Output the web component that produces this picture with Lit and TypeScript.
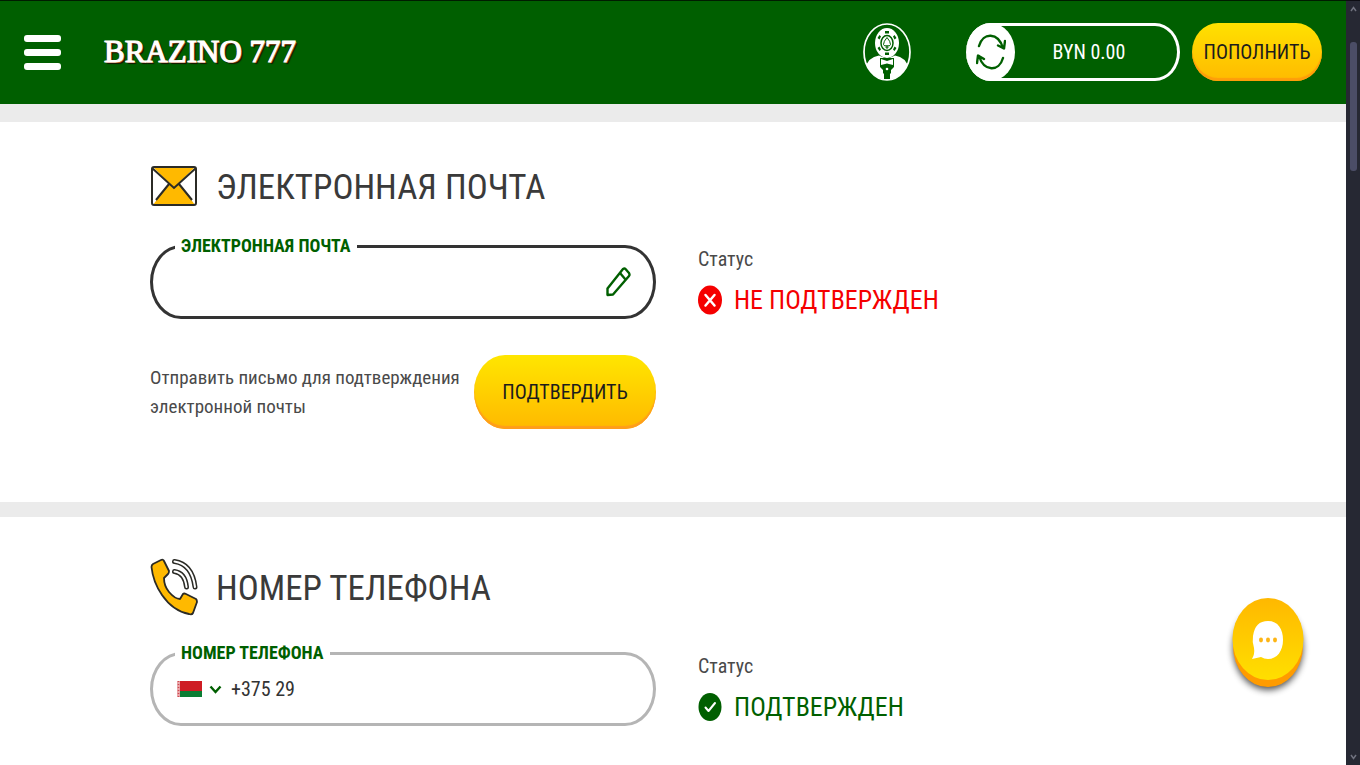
import { LitElement, html, css, svg } from "lit";
import { customElement, property } from "lit/decorators.js";

const envelopeIcon = svg`
  <svg width="48" height="42" viewBox="0 0 48 42" aria-hidden="true">
    <rect x="2" y="2" width="44" height="38" rx="2" fill="#fff"/>
    <path d="M3 2H45L24 23Z" fill="#ffb900"/>
    <path d="M3 40L19 18L24 23L29 18L45 40Z" fill="#ffb900"/>
    <path d="M2 3L24 23L46 3M19 19L6 35M29 19L42 35" fill="none" stroke="#2b2b26" stroke-width="2"/>
    <rect x="2" y="2" width="44" height="38" rx="2" fill="none" stroke="#2b2b26" stroke-width="2"/>
  </svg>`;

const phoneIcon = svg`
  <svg width="48" height="58" viewBox="0 0 48 58" aria-hidden="true">
    <path d="M3 6L11 2Q13 1 14 3L19 13Q19 15 18 16L14 20Q14 28 19 34Q25 41 30 41L33 36Q34 35 36 36L46 41Q47 42 47 44L43 55Q42 57 39 56Q23 53 12 37Q3 24 1.500 9Q1.500 7 3 6Z" fill="#ffb900" stroke="#2b2b26" stroke-width="1.800" stroke-linejoin="round"/>
    <path d="M24.500 3.500Q42 6 45 29M24.500 13.500Q35 15 36.500 29" fill="none" stroke="#2b2b26" stroke-width="5" stroke-linecap="round"/>
    <path d="M24.500 3.500Q42 6 45 29M24.500 13.500Q35 15 36.500 29" fill="none" stroke="#fff" stroke-width="2" stroke-linecap="round"/>
  </svg>`;

const avatarIcon = svg`
  <svg width="48" height="58" viewBox="0 0 48 58" aria-hidden="true">
    <defs><clipPath id="face"><ellipse cx="24" cy="29" rx="23" ry="28"/></clipPath></defs>
    <g clip-path="url(#face)">
      <path d="M2 46Q5 34 16 32.500L24 36L32 32.500Q43 34 46 46V58H2Z" fill="#fff"/>
      <path d="M17 35H31V44L28 47V50L27 51V56H21V51L20 50V47L17 44Z" fill="#005f00"/>
      <path d="M18 36L24 38L30 36V42L24 40.500L18 42Z" fill="#fff"/>
      <circle cx="24" cy="46" r="1.300" fill="#fff"/>
    </g>
    <ellipse cx="24" cy="20" rx="12" ry="15" fill="#fff"/>
    <g fill="#005f00">
      <path d="M22 8H26V10.500H22ZM22 29.500H26V32H22ZM14.500 15L16.500 12L18 13.500L16.500 16.500ZM33.500 15L31.500 12L30 13.500L31.500 16.500ZM14.500 25L16.500 28L18 26.500L16.500 23.500ZM33.500 25L31.500 28L30 26.500L31.500 23.500Z"/>
    </g>
    <ellipse cx="24" cy="20" rx="6" ry="7.500" fill="#fff" stroke="#005f00" stroke-width="1.500"/>
    <path d="M24 14.500Q20.500 18.500 20.500 21.500Q21.500 24 23.500 22.500L23 25H25L24.500 22.500Q26.500 24 27.500 21.500Q27.500 18.500 24 14.500Z" fill="none" stroke="#005f00" stroke-width="1"/>
    <ellipse cx="24" cy="29" rx="23" ry="28" fill="none" stroke="#fff" stroke-width="1.700"/>
  </svg>`;

const refreshIcon = svg`
  <svg width="30" height="36" viewBox="0 0 30 36" aria-hidden="true" fill="none" stroke="#005f00" stroke-width="2.400" stroke-linecap="round" stroke-linejoin="round">
    <path d="M3 12C7 -2 22 -2 27 14M22 11.500L28 14.500L29 7"/>
    <path d="M27 24C23 38 8 38 3 22M8 25L2 21.500L1 29"/>
  </svg>`;

const pencilIcon = svg`
  <svg width="26" height="30" viewBox="0 0 26 30" aria-hidden="true" fill="none" stroke="#005f00" stroke-width="2.400" stroke-linejoin="round">
    <path d="M2.500 28V21.500L18 2Q19.500 1 20.500 2L24 6Q25 8 24 9L8 27.500Z"/>
    <path d="M15 6L20.500 12.500"/>
  </svg>`;

const crossIcon = svg`
  <svg width="24" height="30" viewBox="0 0 24 30" aria-hidden="true">
    <ellipse cx="12" cy="15" rx="12" ry="14.500" fill="#f50000"/>
    <path d="M7.500 10L16.500 20.500M16.500 10L7.500 20.500" stroke="#fff" stroke-width="2.500" stroke-linecap="round"/>
  </svg>`;

const tickIcon = svg`
  <svg width="24" height="30" viewBox="0 0 24 30" aria-hidden="true">
    <ellipse cx="12" cy="15" rx="11.500" ry="14" fill="#005f00"/>
    <path d="M7.500 15.500L10.500 19L17 11" fill="none" stroke="#fff" stroke-width="2" stroke-linecap="round" stroke-linejoin="round"/>
  </svg>`;

@customElement("status-block")
class StatusBlock extends LitElement {
  @property({ type: Boolean }) confirmed = false;

  static styles = css`
    :host { display: block; padding-top: 8px; }
    .caption { margin: 0 0 11px; font-size: 20px; line-height: 30px; color: #4a4a4a; }
    .value { margin: 0; display: flex; align-items: center; gap: 12px; font-size: 26px; line-height: 30px; color: #f50000; }
    .value.ok { color: #005f00; }
    svg { display: block; flex: none; }
  `;

  render() {
    return html`
      <p class="caption">Статус</p>
      <p class="value ${this.confirmed ? "ok" : ""}">
        ${this.confirmed ? tickIcon : crossIcon}
        <span>${this.confirmed ? "ПОДТВЕРЖДЕН" : "НЕ ПОДТВЕРЖДЕН"}</span>
      </p>`;
  }
}

@customElement("top-bar")
class TopBar extends LitElement {
  static styles = css`
    :host { display: block; background: #005f00; border-top: 1px solid #001c00; }
    .bar { display: flex; align-items: center; height: 103px; padding: 0 24px 1px; box-sizing: border-box; }
    button { border: 0; padding: 0; background: none; font: inherit; cursor: pointer; }
    svg { display: block; }
    .menu { display: grid; gap: 7px; width: 37px; }
    .menu span { height: 7px; border-radius: 3px; background: #fff; }
    .logo { margin-left: 43px; font: 31px/40px "Liberation Serif", serif; color: #fff; text-decoration: none; white-space: nowrap;
      -webkit-text-stroke: 1px #fff; text-shadow: 1px 1px 0 #b5602c, -1px 0 0 #b5602c, 2px 2px 1px #1c1000; }
    .space { flex: 1; }
    .balance { display: flex; align-items: center; margin: 0 12px 0 55px; width: 214px; height: 58px; box-sizing: border-box;
      border: 3px solid #fff; border-left: 0; border-radius: 25px / 29px; color: #fff; }
    .refresh { display: grid; place-items: center; flex: none; width: 49px; height: 58px; border-radius: 50%; background: #fff; }
    .amount { flex: 1; text-align: center; padding-right: 14px; font-size: 20px; line-height: 30px; }
    .deposit { width: 130px; height: 58px; border-radius: 26px / 29px; background: linear-gradient(#ffe100, #ffba00);
      box-shadow: inset 0 -3px 1px #ff9d0a; font-size: 20px; color: #1c1c1c; }
  `;

  render() {
    return html`
      <header class="bar">
        <button class="menu" aria-label="Меню"><span></span><span></span><span></span></button>
        <a class="logo" href="#">BRAZINO 777</a>
        <span class="space"></span>
        <button aria-label="Профиль">${avatarIcon}</button>
        <div class="balance">
          <button class="refresh" aria-label="Обновить баланс">${refreshIcon}</button>
          <span class="amount">BYN 0.00</span>
        </div>
        <button class="deposit">ПОПОЛНИТЬ</button>
      </header>`;
  }
}

@customElement("app-root")
class AppRoot extends LitElement {
  static styles = css`
    :host { display: grid; grid-template-columns: minmax(0, 1fr) 14px; min-height: 100vh; background: #fff;
      font-family: "Roboto Condensed", "Liberation Sans", Arial, sans-serif; color: #333; }
    .page { display: flex; flex-direction: column; background: #fff; }
    main { display: flex; flex-direction: column; }
    svg { display: block; flex: none; }
    section { padding: 41px 150px 0; border-top: 15px solid #ebebeb; }
    section.first { border-top-width: 18px; padding-bottom: 73px; }
    .title { display: flex; align-items: center; gap: 18px; margin-bottom: 27px; }
    h2 { margin: 0 0 -2px; padding-top: 2px; font-size: 35px; line-height: 46px; font-weight: 400; color: #3a3a3a; }
    .columns { display: grid; grid-template-columns: minmax(0, 506px) minmax(0, 1fr); column-gap: 42px; align-items: start; }
    fieldset { display: flex; align-items: center; min-width: 0; margin: 0; padding: 0 22px 8px; border: 3px solid #333; border-radius: 31px / 37px; }
    fieldset.pale { border-color: #b5b5b5; }
    legend { padding: 0 6px; font-size: 18px; line-height: 20px; font-weight: 700; color: #005f00; }
    input { flex: 1; min-width: 0; height: 52px; border: 0; padding: 0; outline: 0; background: none; color: #333; font: inherit; font-size: 20px; }
    button { border: 0; padding: 0; background: none; font: inherit; cursor: pointer; }
    .country { display: flex; align-items: center; gap: 7px; margin: 0 9px 0 2px; }
    .send { display: flex; align-items: center; gap: 8px; margin-top: 36px; }
    .send p { flex: 1; margin: 0; padding-bottom: 1px; font-size: 19px; line-height: 29px; color: #4a4a4a; }
    .confirm { flex: none; width: 182px; height: 74px; border-radius: 31px / 37px; background: linear-gradient(#ffe600, #ffb900);
      box-shadow: inset 0 -3px 1px #ff9d1c; font-size: 20px; color: #1c1c1c; }
    .chat { position: fixed; right: 56px; bottom: 75px; width: 72px; height: 92px; }
    .chat svg { overflow: visible; }
    .track { display: flex; flex-direction: column; justify-content: space-between; align-items: center; background: #262833;
      border-top: 1px solid #0c0c12; padding: 5px 0; box-sizing: border-box; }
    .thumb { width: 7px; height: 129px; border-radius: 3px; background: #4b4d66; margin: 30px 0 auto; }
  `;

  render() {
    return html`
      <div class="page">
        <top-bar></top-bar>
        <main>
          <section class="first">
            <div class="title">${envelopeIcon}<h2>ЭЛЕКТРОННАЯ ПОЧТА</h2></div>
            <div class="columns">
              <div>
                <fieldset>
                  <legend><label for="email">ЭЛЕКТРОННАЯ ПОЧТА</label></legend>
                  <input id="email" type="email" />
                  <button aria-label="Изменить">${pencilIcon}</button>
                </fieldset>
                <div class="send">
                  <p>Отправить письмо для подтверждения электронной почты</p>
                  <button class="confirm">ПОДТВЕРДИТЬ</button>
                </div>
              </div>
              <status-block></status-block>
            </div>
          </section>
          <section>
            <div class="title">${phoneIcon}<h2>НОМЕР ТЕЛЕФОНА</h2></div>
            <div class="columns">
              <fieldset class="pale">
                <legend><label for="phone">НОМЕР ТЕЛЕФОНА</label></legend>
                <button class="country" aria-label="Код страны">
                  <svg width="25" height="16" viewBox="0 0 25 16">
                    <path d="M0 0H25V10H0Z" fill="#ce1c24"/><path d="M0 10H25V16H0Z" fill="#0b7d34"/>
                    <path d="M0 0H3V16H0Z" fill="#e9a5a8"/><path d="M1.500 0V16" stroke="#ce4a50" stroke-width="1.500" stroke-dasharray="1 2"/>
                  </svg>
                  <svg width="13" height="9" viewBox="0 0 13 9"><path d="M1.500 1.500L6.500 7L11.500 1.500" fill="none" stroke="#005f00" stroke-width="2.400"/></svg>
                </button>
                <input id="phone" type="tel" value="+375 29" />
              </fieldset>
              <status-block confirmed></status-block>
            </div>
          </section>
        </main>
      </div>
      <div class="track" aria-hidden="true">
        <svg width="7" height="6" viewBox="0 0 7 6"><path d="M1 5L3.500 1.500L6 5" fill="none" stroke="#70727f" stroke-width="1.500"/></svg>
        <div class="thumb"></div>
        <svg width="7" height="6" viewBox="0 0 7 6"><path d="M1 1L3.500 4.500L6 1" fill="none" stroke="#70727f" stroke-width="1.500"/></svg>
      </div>
      <button class="chat" aria-label="Чат поддержки">
        <svg width="72" height="92" viewBox="0 0 72 92">
          <defs>
            <linearGradient id="gold" x2="0" y2="1"><stop stop-color="#ffb800"/><stop offset="1" stop-color="#ffdf00"/></linearGradient>
            <filter id="soft" x="-30%" y="-30%" width="160%" height="160%"><feGaussianBlur stdDeviation="3.500"/></filter>
          </defs>
          <ellipse cx="36" cy="50" rx="35" ry="42" fill="#000" opacity=".7" filter="url(#soft)"/>
          <ellipse cx="36" cy="48" rx="35" ry="41" fill="#ff9b00"/>
          <ellipse cx="36" cy="41" rx="35.500" ry="41" fill="url(#gold)"/>
          <path d="M36 23C46 23 51 31 51 42S45 61 36 61Q32 61 29 59L20 61Q23 56 22 50Q20 44 21 38Q23 23 36 23Z" fill="#fff"/>
          <g fill="#fdb515"><ellipse cx="29" cy="42" rx="2" ry="2.400"/><ellipse cx="36" cy="42" rx="2" ry="2.400"/><ellipse cx="43" cy="42" rx="2" ry="2.400"/></g>
        </svg>
      </button>`;
  }
}
